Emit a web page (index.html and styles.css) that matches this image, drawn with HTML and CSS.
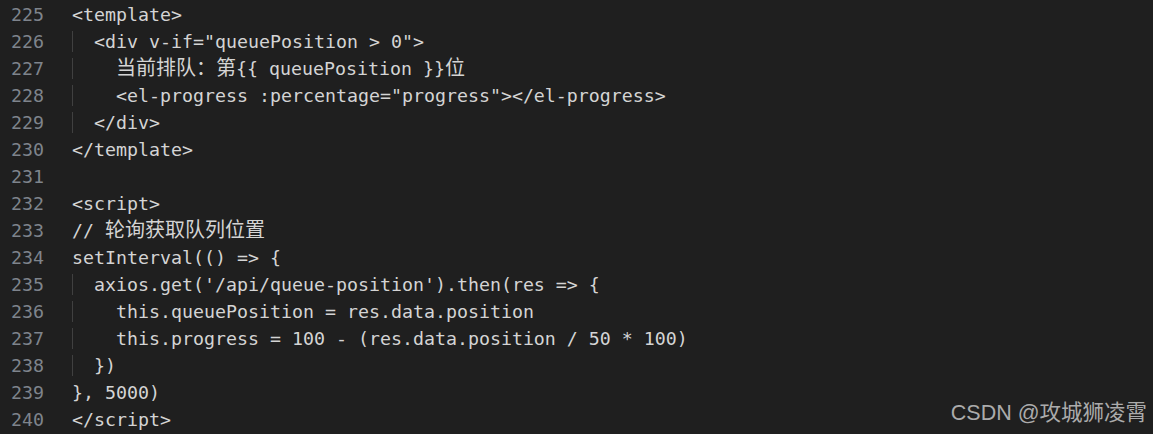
FILE: index.html
```html
<!DOCTYPE html>
<html lang="zh-CN">
<head>
<meta charset="utf-8">
<title>code</title>
<link rel="stylesheet" href="styles.css">
</head>
<body>
<div class="editor">
  <div class="line"><span class="ln">225</span><span class="code">&lt;template&gt;</span></div>
  <div class="line"><span class="ln">226</span><span class="code"><span class="guide">  </span>&lt;div v-if="queuePosition &gt; 0"&gt;</span></div>
  <div class="line"><span class="ln">227</span><span class="code"><span class="guide">  </span>  <span class="cjk">当前排队：第</span>{{ queuePosition }}<span class="cjk">位</span></span></div>
  <div class="line"><span class="ln">228</span><span class="code"><span class="guide">  </span>  &lt;el-progress :percentage="progress"&gt;&lt;/el-progress&gt;</span></div>
  <div class="line"><span class="ln">229</span><span class="code"><span class="guide">  </span>&lt;/div&gt;</span></div>
  <div class="line"><span class="ln">230</span><span class="code">&lt;/template&gt;</span></div>
  <div class="line"><span class="ln">231</span><span class="code"></span></div>
  <div class="line"><span class="ln">232</span><span class="code">&lt;script&gt;</span></div>
  <div class="line"><span class="ln">233</span><span class="code">// <span class="cjk">轮询获取队列位置</span></span></div>
  <div class="line"><span class="ln">234</span><span class="code">setInterval(() =&gt; {</span></div>
  <div class="line"><span class="ln">235</span><span class="code"><span class="guide">  </span>axios.get('/api/queue-position').then(res =&gt; {</span></div>
  <div class="line"><span class="ln">236</span><span class="code"><span class="guide">  </span>  this.queuePosition = res.data.position</span></div>
  <div class="line"><span class="ln">237</span><span class="code"><span class="guide">  </span>  this.progress = 100 - (res.data.position / 50 * 100)</span></div>
  <div class="line"><span class="ln">238</span><span class="code"><span class="guide">  </span>})</span></div>
  <div class="line"><span class="ln">239</span><span class="code">}, 5000)</span></div>
  <div class="line"><span class="ln">240</span><span class="code">&lt;/script&gt;</span></div>
</div>
<div class="watermark">CSDN @攻城狮凌霄</div>
</body>
</html>
```

FILE: styles.css
```css
html, body {
  margin: 0;
  padding: 0;
  background: #1f1f1f;
  height: 100%;
  overflow: hidden;
}

body {
  position: relative;
}

.editor {
  padding-top: 1px;
  font-family: "DejaVu Sans Mono", "Noto Sans CJK SC", monospace;
  font-size: 18.27px;
  color: #d4d4d4;
}

.line {
  display: flex;
  height: 27px;
  line-height: 27px;
  white-space: pre;
}

.ln {
  width: 44px;
  text-align: right;
  color: #7e848c;
  flex-shrink: 0;
}

.code {
  margin-left: 28px;
}

.guide {
  box-shadow: inset 1px 0 0 #404040;
}

.cjk {
  font-family: "Noto Sans CJK SC", sans-serif;
  font-size: 20px;
  line-height: 1;
}

.watermark {
  position: absolute;
  right: 6px;
  bottom: 8px;
  font-family: "Liberation Sans", "Noto Sans CJK SC", sans-serif;
  font-size: 21.5px;
  color: #ababab;
  line-height: 26px;
}
```
